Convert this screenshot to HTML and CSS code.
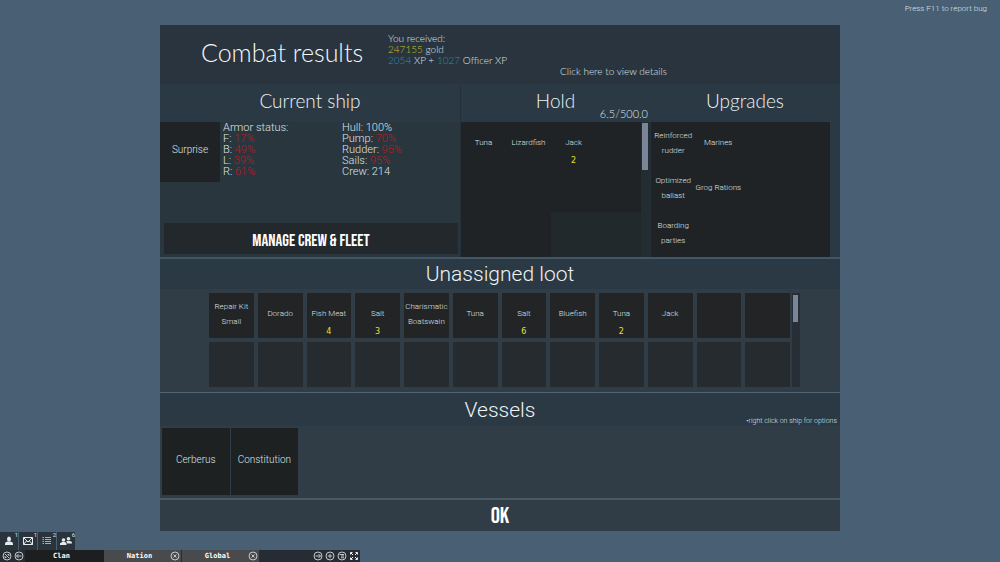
FILE: index.html
```html
<!DOCTYPE html>
<html lang="en">
<head>
<meta charset="utf-8">
<title>Combat results</title>
<link rel="stylesheet" href="styles.css">
</head>
<body>
<p class="report">Press F11 to report bug</p>
<main class="panel">
  <header class="summary">
    <h1 class="summary-title">Combat results</h1>
    <div class="rewards">
      <p>You received:</p>
      <p><span class="gold">247155</span> gold</p>
      <p><span class="xp">2054</span> XP + <span class="xp">1027</span> Officer XP</p>
    </div>
    <a class="details" href="#details">Click here to view details</a>
  </header>

  <div class="overview">
    <section class="ship">
      <header class="band"><h2 class="heading">Current ship</h2></header>
      <div class="ship-body">
        <div class="ship-tile">Surprise</div>
        <div class="stats">
          <p>Armor status:</p>
          <p>F: <span class="bad">17%</span></p>
          <p>B: <span class="bad">49%</span></p>
          <p>L: <span class="bad">39%</span></p>
          <p>R: <span class="bad">61%</span></p>
        </div>
        <div class="stats">
          <p>Hull: 100%</p>
          <p>Pump: <span class="bad">70%</span></p>
          <p>Rudder: <span class="bad">95%</span></p>
          <p>Sails: <span class="bad">95%</span></p>
          <p>Crew: 214</p>
        </div>
      </div>
      <button class="manage" type="button">MANAGE CREW &amp; FLEET</button>
    </section>

    <section class="hold">
      <header class="band"><h2 class="heading">Hold</h2><span class="capacity">6.5/500.0</span></header>
      <div class="hold-body">
        <ul class="slots">
          <li class="slot">Tuna</li>
          <li class="slot">Lizardfish</li>
          <li class="slot">Jack<span class="count">2</span></li>
          <li class="slot"></li>
          <li class="slot"></li><li class="slot"></li><li class="slot"></li><li class="slot"></li>
          <li class="slot"></li><li class="slot"></li>
          <li class="slot locked"></li><li class="slot locked"></li>
        </ul>
        <div class="track"><div class="thumb"></div></div>
      </div>
    </section>

    <section class="upgrades">
      <header class="band"><h2 class="heading">Upgrades</h2></header>
      <ul class="slots">
        <li class="slot">Reinforced<br>rudder</li><li class="slot">Marines</li><li class="slot"></li><li class="slot"></li>
        <li class="slot">Optimized<br>ballast</li><li class="slot">Grog Rations</li><li class="slot"></li><li class="slot"></li>
        <li class="slot">Boarding<br>parties</li><li class="slot"></li><li class="slot"></li><li class="slot"></li>
      </ul>
    </section>
  </div>

  <section class="loot">
    <header class="loot-head"><h2 class="heading plain">Unassigned loot</h2></header>
    <div class="loot-body">
      <ul class="loot-grid">
        <li class="slot">Repair Kit<br>Small</li>
        <li class="slot">Dorado</li>
        <li class="slot">Fish Meat<span class="count">4</span></li>
        <li class="slot">Salt<span class="count">3</span></li>
        <li class="slot">Charismatic<br>Boatswain</li>
        <li class="slot">Tuna</li>
        <li class="slot">Salt<span class="count">6</span></li>
        <li class="slot">Bluefish</li>
        <li class="slot">Tuna<span class="count">2</span></li>
        <li class="slot">Jack</li>
        <li class="slot"></li><li class="slot"></li>
        <li class="slot empty"></li><li class="slot empty"></li><li class="slot empty"></li><li class="slot empty"></li>
        <li class="slot empty"></li><li class="slot empty"></li><li class="slot empty"></li><li class="slot empty"></li>
        <li class="slot empty"></li><li class="slot empty"></li><li class="slot empty"></li><li class="slot empty"></li>
      </ul>
      <div class="track loot-track"><div class="thumb"></div></div>
    </div>
  </section>

  <section class="vessels">
    <header class="vessels-head"><h2 class="heading plain">Vessels</h2><span class="hint">•right click on ship for options</span></header>
    <div class="vessel-list">
      <div class="vessel">Cerberus</div>
      <div class="vessel">Constitution</div>
    </div>
  </section>
  <button class="ok" type="button">OK</button>
</main>

<footer class="chat">
  <nav class="quick" aria-label="Messages">
    <button class="quick-btn" type="button" aria-label="Profile"><svg class="quick-icon" viewBox="0 0 12 12"><ellipse cx="6" cy="4" rx="2" ry="2.6"/><path d="M2 10V8.500Q2 7 4.600 6.600h2.800Q10 7 10 8.500V10z"/></svg><sup class="badge">1</sup></button>
    <button class="quick-btn" type="button" aria-label="Mail"><svg class="quick-icon line" viewBox="0 0 12 12"><path d="M1.500 2.500h9v7h-9zM1.500 2.500L6 7l4.500-4.500M1.500 9.500l3-3.500M10.500 9.500l-3-3.500"/></svg><sup class="badge">1</sup></button>
    <button class="quick-btn" type="button" aria-label="Log"><svg class="quick-icon line dim" viewBox="0 0 12 12"><path d="M1.500 2.500H3M1.500 4.500H3M1.500 6.500H3M1.500 8.500H3M4 2.500h6M4 4.500h6M4 6.500h6M4 8.500h6"/></svg><sup class="badge">2</sup></button>
    <button class="quick-btn" type="button" aria-label="Friends"><svg class="quick-icon" viewBox="0 0 12 12"><circle cx="3.500" cy="5" r="1.800"/><path d="M0 10V8.600Q1 7.200 2.500 7h2Q6.500 7.200 6.500 8.600V10z"/><circle cx="8.500" cy="3.800" r="1.800"/><path d="M7.300 8.500Q7 7 6 6.500L7.500 6h2q2.500.4 2.500 1.700v.8z"/></svg><sup class="badge">6</sup></button>
  </nav>
  <div class="chat-bar">
    <button class="round-btn" type="button" aria-label="Mute"><svg class="round" viewBox="0 0 10 10"><circle cx="5" cy="5" r="4"/><path d="M3 3l4 4M3 5v1.500h1.500M5.500 3.500H7V5"/></svg></button>
    <button class="round-btn" type="button" aria-label="Previous"><svg class="round" viewBox="0 0 10 10"><circle cx="5" cy="5" r="4"/><path d="M2.500 5h5M4.500 3l-2 2 2 2"/></svg></button>
    <button class="tab active" type="button">Clan</button>
    <div class="tab-wrap"><button class="tab" type="button">Nation</button><button class="round-btn" type="button" aria-label="Close Nation"><svg class="round" viewBox="0 0 10 10"><circle cx="5" cy="5" r="4"/><path d="M3.500 3.500l3 3M6.500 3.500l-3 3"/></svg></button></div>
    <div class="tab-wrap"><button class="tab" type="button">Global</button><button class="round-btn" type="button" aria-label="Close Global"><svg class="round" viewBox="0 0 10 10"><circle cx="5" cy="5" r="4"/><path d="M3.500 3.500l3 3M6.500 3.500l-3 3"/></svg></button></div>
    <div class="tools">
      <button class="round-btn" type="button" aria-label="Next"><svg class="round" viewBox="0 0 10 10"><circle cx="5" cy="5" r="4"/><path d="M2.500 5h5M5.500 3l2 2-2 2"/></svg></button>
      <button class="round-btn" type="button" aria-label="Add"><svg class="round" viewBox="0 0 10 10"><circle cx="5" cy="5" r="4"/><path d="M5 2.800v4.400M2.800 5h4.400"/></svg></button>
      <button class="round-btn" type="button" aria-label="Channels"><svg class="round" viewBox="0 0 10 10"><circle cx="5" cy="5" r="4"/><path d="M2.500 3.500H7M4 5h3M4 6.800h3"/></svg></button>
      <button class="round-btn" type="button" aria-label="Expand"><svg class="round bold" viewBox="0 0 10 10"><path d="M1.500 3.500v-2h2M6.500 1.500h2v2M8.500 6.500v2h-2M3.500 8.500h-2v-2M2 2l2 2M8 2L6 4M8 8L6 6M2 8l2-2"/></svg></button>
    </div>
  </div>
</footer>
</body>
</html>
```
FILE: styles.css
```css
* { box-sizing: border-box; }
body {
  margin: 0;
  min-height: 100vh;
  display: flex;
  flex-direction: column;
  background: #495f73;
  color: #dfe3e5;
  font-family: Roboto, "Liberation Sans", sans-serif;
  font-weight: 300;
}
p, h1, h2, ul { margin: 0; padding: 0; }
ul { list-style: none; }
button { margin: 0; padding: 0; border: 0; background: none; color: inherit; font: inherit; cursor: pointer; }

.report { height: 25px; padding: 3px 13px 0; text-align: right; font-size: 8px; line-height: 12px; }
.panel { width: 68%; margin: 0 auto; background: #313d46; }

.summary { display: grid; grid-template-columns: 228fr 172fr 280fr; height: 59px; background: #2a343e; font-family: Lato, sans-serif; }
.summary-title { padding: 0 0 6px 41px; align-self: center; font-size: 25px; line-height: 32px; font-weight: 300; color: #f4f8fa; white-space: nowrap; }
.rewards { padding-top: 8px; font-size: 10px; line-height: 11px; white-space: nowrap; }
.gold { color: #c4c52b; }
.xp { color: #2790ba; }
.details { align-self: end; padding-bottom: 6px; color: inherit; font-size: 10px; line-height: 14px; text-decoration: none; }

.overview { display: grid; grid-template-columns: 300fr 190fr 190fr; background: #29363e; }
.band { display: grid; height: 38px; background: #2a3943; }
.heading { grid-area: 1 / 1; align-self: center; text-align: center; font-family: Lato, sans-serif; font-size: 19px; line-height: 24px; font-weight: 300; color: #eef3f5; padding-bottom: 5px; }
.heading.plain { font-family: Roboto, sans-serif; font-size: 21px; line-height: 26px; padding: 0; }
.ship { display: flex; flex-direction: column; }
.ship-body { display: grid; grid-template-columns: 60fr 119fr 121fr; }
.ship-tile { display: grid; place-items: center; height: 60px; padding-bottom: 5px; background: #202325; font-size: 10px; }
.stats { padding-left: 3px; font-size: 11px; line-height: 11px; }
.bad { color: #b81c25; }
.manage, .ok { color: #fff; font-family: "Bebas Neue", "Roboto Condensed", "Liberation Sans Narrow", "Open Sans Condensed", sans-serif; font-weight: 400; }
.manage { height: 31px; margin: auto 2px 3px 4px; padding-top: 4px; background: #22282b; font-size: 17px; }

.hold { border-left: 1px solid #25313a; }
.capacity { grid-area: 1 / 1; place-self: end; padding-right: 2px; font-family: Lato, sans-serif; font-size: 11px; line-height: 16px; }
.hold-body { display: grid; grid-template-columns: 1fr 6px; column-gap: 1px; padding-right: 2px; background: #232c31; }
.slots { display: grid; grid-template-columns: repeat(4, 1fr); grid-auto-rows: 45px; background: #202326; }
.slot { position: relative; display: grid; place-content: center; padding-bottom: 4px; text-align: center; font-size: 8px; line-height: 15px; white-space: nowrap; }
.locked { background: #22292c; }
.count { position: absolute; left: 0; right: 0; bottom: 0; color: #e6e22c; font-family: "DejaVu Sans", sans-serif; font-size: 8px; line-height: 12px; font-weight: 400; }
.thumb { height: 47px; background: #7a859a; }
.track { padding-top: 1px; }
.upgrades { background: #2a3943; }
.upgrades .slots { margin-right: 10px; border-left: 1px solid #25313a; }

.loot { border-top: 2px solid #415666; }
.loot-head { height: 30px; background: #2a3943; }
.loot-head .heading { padding-top: 2px; }
.loot-body { display: grid; grid-template-columns: 1fr 8px; column-gap: 2px; padding: 4px 40px 5px 49px; }
.loot-grid { display: grid; grid-template-columns: repeat(12, 1fr); grid-auto-rows: 45px; gap: 4px; }
.loot-grid .slot { background: #222426; }
.loot-grid .empty { background: #252b2f; }
.loot-track { padding: 2px 2px 0 1px; background: #272e36; }
.loot-track .thumb { height: 27px; }

.vessels { border-top: 1px solid #536575; }
.vessels-head { display: grid; height: 33px; background: #2a3943; }
.hint { grid-area: 1 / 1; place-self: end; padding-right: 3px; font-size: 7px; line-height: 10px; }
.vessel-list { display: flex; gap: 1px; padding: 2px 2px 3px; }
.vessel { display: grid; place-items: center; width: 10%; min-width: 64px; height: 67px; padding-bottom: 4px; background: #1d2122; font-size: 10px; }
.ok { display: block; width: 100%; height: 33px; padding-top: 2px; border-top: 2px solid #475965; font-size: 23px; line-height: 29px; }

.chat { margin-top: auto; }
.quick { display: flex; gap: 1px; }
.quick-btn { position: relative; width: 18px; height: 18px; background: #2a343d; }
.quick-icon { display: block; width: 12px; height: 12px; margin: 3px auto; fill: #e8eaeb; }
.quick-icon.line { fill: none; stroke: #e8eaeb; }
.quick-icon.dim { stroke: #a6adb2; }
.badge { position: absolute; top: 0; right: 0; font-size: 6px; line-height: 6px; font-weight: 400; }
.chat-bar { display: flex; align-items: center; width: 36%; height: 12px; padding-left: 1px; background: #252c33; }
.round-btn { flex: none; width: 12px; height: 12px; }
.round { display: block; width: 10px; height: 10px; margin: 1px; fill: none; stroke: #c4c7c9; }
.bold { stroke: #eceeef; }
.tab { flex: 1; height: 12px; color: #fff; font-family: "DejaVu Sans Mono", monospace; font-size: 7px; line-height: 12px; font-weight: 700; }
.active { flex: none; width: 79px; padding-right: 6px; background: #1c1e20; }
.tab-wrap { display: flex; width: 78px; padding-left: 6px; background: #484a4d; border-right: 1px solid #252c33; }
.tools { display: flex; margin-left: auto; }
```
